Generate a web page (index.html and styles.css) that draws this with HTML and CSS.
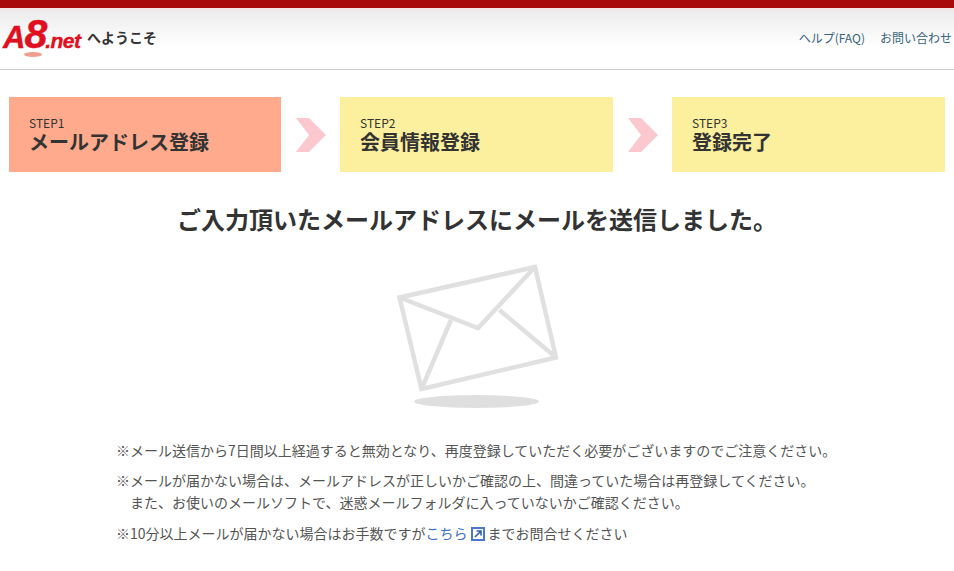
FILE: index.html
```html
<!DOCTYPE html>
<html lang="ja">
<head>
<meta charset="utf-8">
<title>メールアドレス登録</title>
<link rel="stylesheet" href="styles.css">
</head>
<body>
<header class="header">
  <div class="welcome">
    <span class="logo"><span class="logo-a">A</span><span class="logo-8">8</span><span class="logo-net">.net</span><span class="logo-mark"></span></span>
    <span class="welcome-text">へようこそ</span>
  </div>
  <nav class="header-nav">
    <a href="#">ヘルプ(FAQ)</a>
    <a href="#">お問い合わせ</a>
  </nav>
</header>

<ol class="steps">
  <li class="step step-current"><small>STEP1</small><b>メールアドレス登録</b></li>
  <li class="step-arrow"><svg width="30" height="34" viewBox="0 0 30 34"><path d="M0 0H13L30 17L13 34H0L13 17Z" fill="#fcc8cf"/></svg></li>
  <li class="step"><small>STEP2</small><b>会員情報登録</b></li>
  <li class="step-arrow"><svg width="30" height="34" viewBox="0 0 30 34"><path d="M0 0H13L30 17L13 34H0L13 17Z" fill="#fcc8cf"/></svg></li>
  <li class="step"><small>STEP3</small><b>登録完了</b></li>
</ol>

<h1 class="title">ご入力頂いたメールアドレスにメールを送信しました。</h1>

<div class="mail-icon">
  <svg width="170" height="150" viewBox="390 260 170 150">
    <ellipse cx="475.500" cy="401.500" rx="62.500" ry="6.500" fill="#dfdfdf"/>
    <g fill="none" stroke="#e0e0e0" stroke-width="4.500">
      <path d="M398.500 297.500L534 267L555 357.500L420.500 389Z"/>
      <path d="M398.500 297.500L477 328L534 267"/>
      <path d="M450 320L420.500 389M498.500 310L555 357.500"/>
    </g>
  </svg>
</div>

<div class="notes">
  <p>※メール送信から7日間以上経過すると無効となり、再度登録していただく必要がございますのでご注意ください。</p>
  <p>※メールが届かない場合は、メールアドレスが正しいかご確認の上、間違っていた場合は再登録してください。<br><span class="indent">また、お使いのメールソフトで、迷惑メールフォルダに入っていないかご確認ください。</span></p>
  <p>※10分以上メールが届かない場合はお手数ですが<a href="#">こちら<svg class="ext" width="14" height="14" viewBox="0 0 14 14"><rect x="1" y="1" width="12" height="12" fill="#fff" stroke="#4a78d0" stroke-width="2"/><path d="M4 10L9.500 4.500M5.500 4H10V8.500" fill="none" stroke="#2f5fb8" stroke-width="1.600"/></svg></a>までお問合せください</p>
</div>
</body>
</html>
```

FILE: styles.css
```css
*{ box-sizing:border-box; }
body{ margin:0; background:#fff; color:#555; font-family:"Noto Sans CJK JP","Liberation Sans",sans-serif; }
a{ text-decoration:none; }

.header{ display:flex; justify-content:space-between; align-items:flex-start; height:70px; border-top:8px solid #a80a0a; border-bottom:1px solid #ccc; background:linear-gradient(#f6e4e0,#ececec 3px,#fff 38px); }
.welcome{ display:flex; align-items:flex-start; padding:9px 0 0 3px; }
.logo{ position:relative; display:flex; align-items:baseline; width:79px; height:40px; color:#e01020; font-family:"Liberation Sans",sans-serif; font-weight:bold; font-style:italic; line-height:34px; white-space:nowrap; -webkit-text-stroke:.4px #e01020; }
.logo-a{ font-size:31px; letter-spacing:-1px; }
.logo-8{ font-size:41px; letter-spacing:-2px; }
.logo-net{ font-size:21px; letter-spacing:-.5px; }
.logo-mark{ position:absolute; left:21px; top:35px; width:18px; height:5px; border-radius:50%; background:#eea08c; }
.welcome-text{ margin:10px 0 0 5px; color:#333; font-size:14px; font-weight:bold; line-height:20px; }
.header-nav{ display:flex; gap:15px; padding:21px 2px 0 0; font-size:12px; line-height:18px; }
.header-nav a{ color:#36647c; }

.steps{ display:flex; align-items:center; margin:27px 9px 0; padding:0; list-style:none; }
.step{ display:flex; flex-direction:column; width:273px; height:75px; padding:18px 20px 0; background:#fcf09e; color:#333; }
.step-current{ width:272px; background:#ffaa8c; }
.step small{ font-size:12px; line-height:15px; }
.step b{ font-size:20px; line-height:23px; }
.step-arrow{ display:flex; margin:0 14px 0 15px; }

.title{ margin:30px 0 0; color:#333; font-size:24px; font-weight:bold; line-height:34px; text-align:center; }

.mail-icon{ display:flex; justify-content:center; margin-top:24px; padding-right:3px; }

.notes{ margin:29px 0 0 116px; font-size:14px; line-height:22px; }
.notes p{ margin:0 0 8px; }
.notes p:last-child{ margin-top:9px; }
.notes a{ color:#4070c8; }
.indent{ padding-left:14px; }
.ext{ margin:0 3px; vertical-align:-2px; }
```
